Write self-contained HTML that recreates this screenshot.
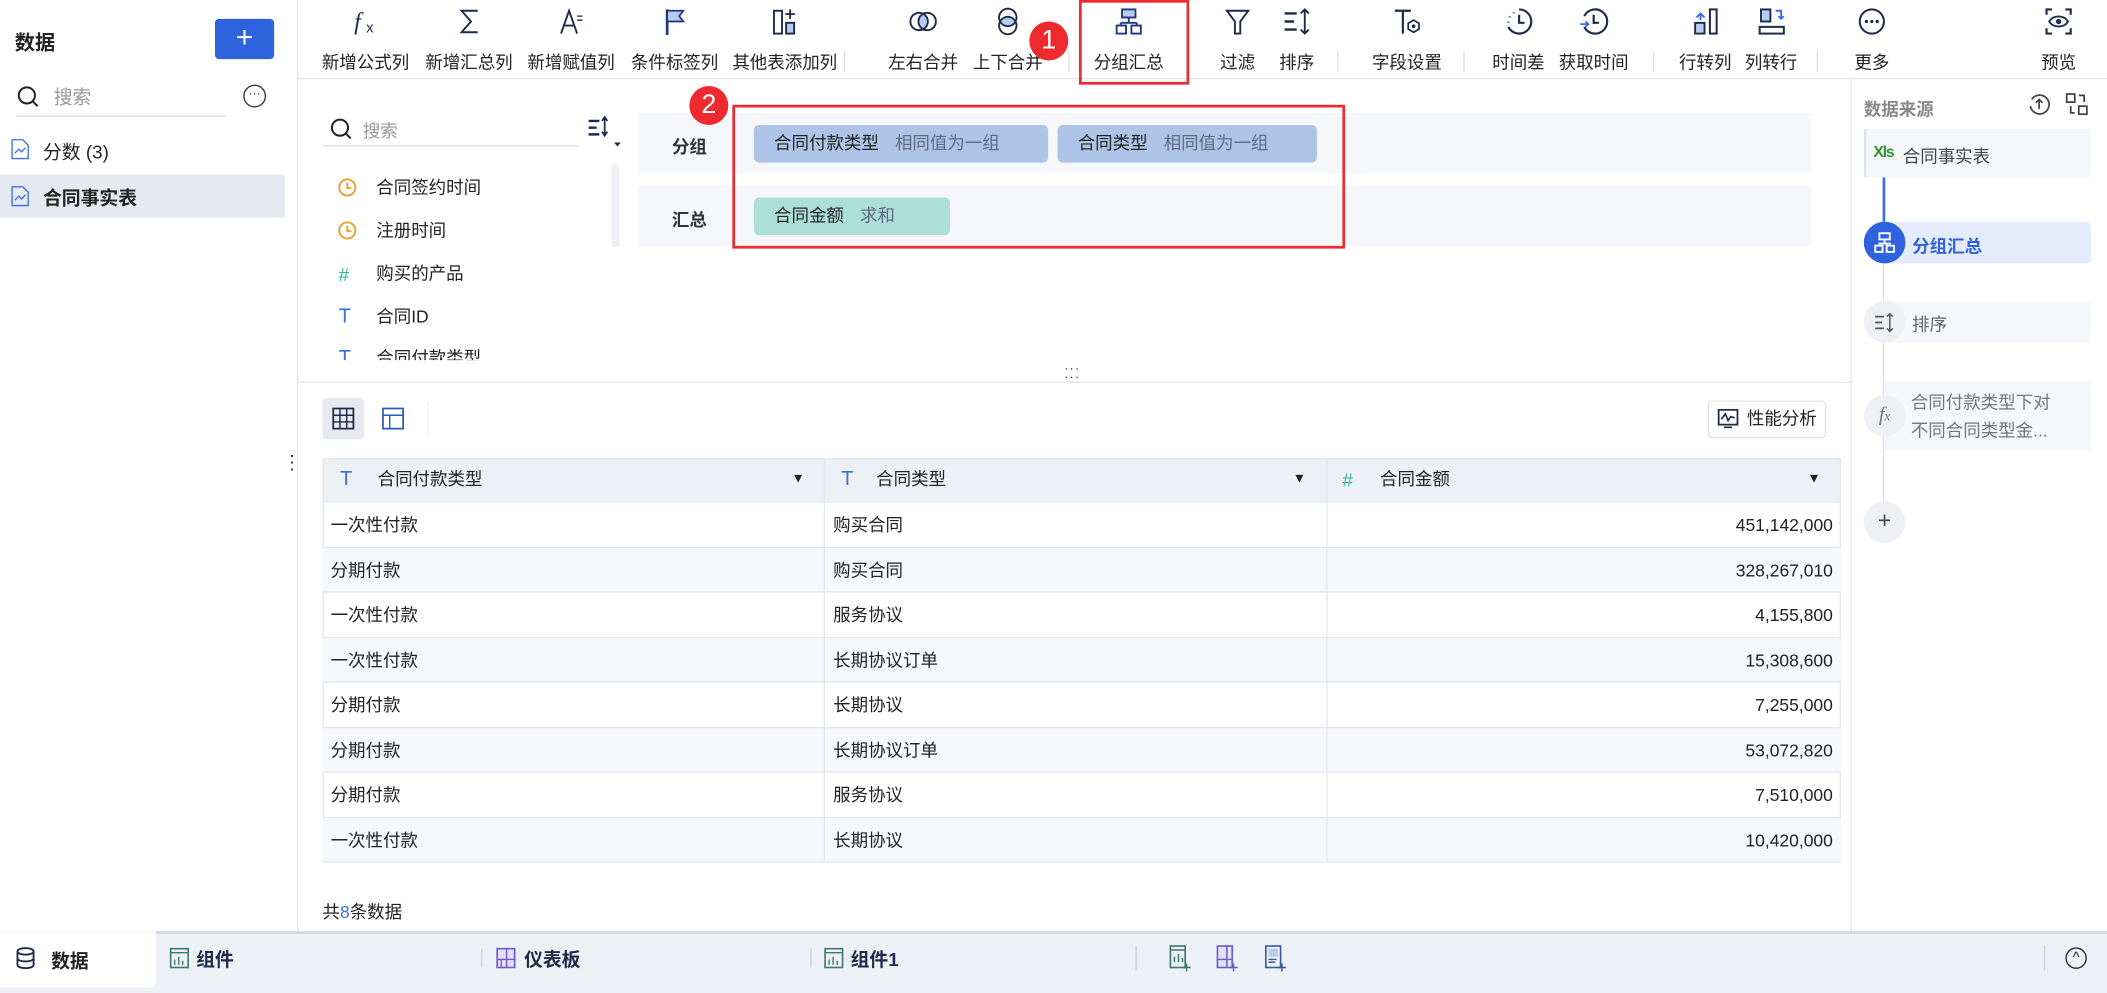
<!DOCTYPE html>
<html><head><meta charset="utf-8">
<style>
*{margin:0;padding:0;box-sizing:border-box}
html,body{width:2107px;height:993px;overflow:hidden;background:#fff}
#w{position:absolute;left:0;top:0;width:1568px;height:739px;transform:scale(1.34375);transform-origin:0 0;font-family:"Liberation Sans","Noto Sans CJK SC",sans-serif;font-size:13px;color:#222;}
.a{position:absolute;white-space:nowrap}
.tb{position:absolute;top:0;text-align:center;transform:translateX(-50%)}
.tb svg{display:block;margin:5px auto 0;width:22px;height:22px}
.tb span{display:block;margin-top:9px;font-size:13px;color:#222}
.sep{position:absolute;width:1px;background:#dde0e6}
.chip{position:absolute;height:28px;border-radius:4px;line-height:28px;padding-left:15px;font-size:13px}
.chip i{font-style:normal;color:#5d6b85;margin-left:12px}
.row{position:absolute;left:240px;width:1130px;height:33.5px;border-bottom:1px solid #e3e6ec;line-height:33px;font-size:13px}
.row div{position:absolute;top:0}
.ic{color:#3a6fe0;line-height:16px}
.lh{line-height:16px}
</style></head><body><div id="w">

<!-- left panel -->
<div class="a" style="left:0;top:0;width:222px;height:695px;border-right:1px solid #e3e6ec"></div>
<div class="a" style="left:11px;top:21px;font-size:15px;font-weight:bold">数据</div>
<div class="a" style="left:160px;top:14px;width:44px;height:30px;background:#2f62dd;border-radius:3px;color:#fff;text-align:center;line-height:28px;font-size:22px">+</div>
<svg class="a" style="left:12px;top:63px" width="18" height="18" viewBox="0 0 18 18"><circle cx="8" cy="8" r="6" fill="none" stroke="#222" stroke-width="1.5"/><path d="M12 12l4 4" stroke="#222" stroke-width="1.5"/></svg>
<div class="a" style="left:40px;top:62px;color:#999;font-size:14px">搜索</div>
<div class="a" style="left:12px;top:86px;width:156px;height:1px;background:#d8dbe2"></div>
<div class="a" style="left:181px;top:63px;width:17px;height:17px;border:1.3px solid #333;border-radius:50%;font-size:9px;text-align:center;line-height:10px">···</div>
<svg class="a" style="left:8px;top:103px" width="14" height="16"><path d="M1 1h8l4 4v10H1z" fill="none" stroke="#3a6fe0"/><path d="M3 11l3-3 2 2 3-3" fill="none" stroke="#3a6fe0"/></svg>
<div class="a" style="left:32px;top:103px;font-size:14px">分数 (3)</div>
<div class="a" style="left:0;top:130px;width:212px;height:32px;background:#e6e9f1"></div>
<svg class="a" style="left:8px;top:138px" width="14" height="16"><path d="M1 1h8l4 4v10H1z" fill="none" stroke="#3a6fe0"/><path d="M3 11l3-3 2 2 3-3" fill="none" stroke="#3a6fe0"/></svg>
<div class="a" style="left:32px;top:137px;font-size:14px;font-weight:bold">合同事实表</div>
<div class="a" style="left:215px;top:336px;font-size:14px;line-height:5px;width:3px">·<br>·<br>·</div>

<!-- toolbar -->
<div class="a" style="left:222px;top:58px;width:1346px;height:1px;background:#e3e6ec"></div>
<div class="tb" style="left:272px"><svg viewBox="0 0 22 22"><text x="2" y="17" font-size="18" font-style="italic" font-family="Liberation Serif" fill="#1e2a4a">f</text><text x="11" y="19" font-size="11" fill="#1e2a4a">x</text></svg><span>新增公式列</span></div>
<div class="tb" style="left:349px"><svg viewBox="0 0 22 22"><path d="M17 3H5l7 8-7 8h12" fill="none" stroke="#1e2a4a" stroke-width="1.4"/></svg><span>新增汇总列</span></div>
<div class="tb" style="left:425px"><svg viewBox="0 0 22 22"><path d="M3 20L9 3l6 17M5.5 14h7" fill="none" stroke="#1e2a4a" stroke-width="1.4"/><path d="M15 7h4M15 10h4" stroke="#1e2a4a"/></svg><span>新增赋值列</span></div>
<div class="tb" style="left:502px"><svg viewBox="0 0 22 22"><path d="M5 2v19" stroke="#1e3a7a" stroke-width="2"/><path d="M5 3h12l-3 4 3 4H5z" fill="#b6cbf0" stroke="#1e3a7a" stroke-width="1.3"/></svg><span>条件标签列</span></div>
<div class="tb" style="left:584px"><svg viewBox="0 0 22 22"><rect x="3" y="3" width="6" height="17" fill="none" stroke="#1e2a4a" stroke-width="1.4"/><rect x="12" y="12" width="6" height="8" fill="#b6cbf0" stroke="#1e2a4a" stroke-width="1.4"/><path d="M15 2v7M11.5 5.5h7" stroke="#1e2a4a" stroke-width="1.4"/></svg><span>其他表添加列</span></div>
<div class="sep" style="left:628px;top:38px;height:16px"></div>
<div class="tb" style="left:687px"><svg viewBox="0 0 22 22"><ellipse cx="11" cy="11" rx="3" ry="6" fill="#b6cbf0"/><circle cx="8" cy="11" r="6.5" fill="none" stroke="#1e2a4a" stroke-width="1.4"/><circle cx="14" cy="11" r="6.5" fill="none" stroke="#1e2a4a" stroke-width="1.4"/></svg><span>左右合并</span></div>
<div class="tb" style="left:750px"><svg viewBox="0 0 22 22"><ellipse cx="11" cy="11" rx="6" ry="3" fill="#b6cbf0"/><circle cx="11" cy="8" r="6.5" fill="none" stroke="#1e2a4a" stroke-width="1.4"/><circle cx="11" cy="14" r="6.5" fill="none" stroke="#1e2a4a" stroke-width="1.4"/></svg><span>上下合并</span></div>
<div class="sep" style="left:795px;top:38px;height:16px"></div>
<div class="tb" style="left:840px"><svg viewBox="0 0 22 22"><rect x="6" y="2" width="10" height="6" fill="#b6cbf0" stroke="#1e3a7a" stroke-width="1.4"/><path d="M11 8v4M5 12h12M5 12v2M17 12v2" fill="none" stroke="#1e3a7a" stroke-width="1.4"/><rect x="2" y="14" width="7" height="6" fill="none" stroke="#1e3a7a" stroke-width="1.4"/><rect x="13" y="14" width="7" height="6" fill="none" stroke="#1e3a7a" stroke-width="1.4"/></svg><span>分组汇总</span></div>
<div class="a" style="left:803px;top:0;width:82px;height:63px;border:2px solid #ee2a2e"></div>
<div class="tb" style="left:921px"><svg viewBox="0 0 22 22"><path d="M3 3h16l-6 8v9h-4v-9z" fill="none" stroke="#1e2a4a" stroke-width="1.4"/></svg><span>过滤</span></div>
<div class="tb" style="left:965px"><svg viewBox="0 0 22 22"><path d="M2 5h9M2 11h7M2 17h9" stroke="#1e2a4a" stroke-width="1.8"/><path d="M17 2v18M14 5l3-3 3 3M14 17l3 3 3-3" fill="none" stroke="#1e2a4a" stroke-width="1.4"/></svg><span>排序</span></div>
<div class="sep" style="left:995px;top:38px;height:16px"></div>
<div class="tb" style="left:1047px"><svg viewBox="0 0 22 22"><path d="M2 3h12M8 3v17" stroke="#1e2a4a" stroke-width="1.6"/><path d="M16 10l4 2.3v4.4L16 19l-4-2.3v-4.4z" fill="none" stroke="#1e2a4a" stroke-width="1.3"/><circle cx="16" cy="14.5" r="1.4" fill="#1e2a4a"/></svg><span>字段设置</span></div>
<div class="sep" style="left:1089px;top:38px;height:16px"></div>
<div class="tb" style="left:1130px"><svg viewBox="0 0 22 22"><path d="M11 2a9 9 0 1 1-8 13" fill="none" stroke="#1e2a4a" stroke-width="1.6"/><path d="M3 11v1M4 7v1M7 4v1" stroke="#3a6fe0" stroke-width="1.6"/><path d="M11 6v6h4" fill="none" stroke="#1e2a4a" stroke-width="1.6"/></svg><span>时间差</span></div>
<div class="tb" style="left:1186px"><svg viewBox="0 0 22 22"><path d="M4 7a9 9 0 1 1 0 8" fill="none" stroke="#1e2a4a" stroke-width="1.6"/><path d="M11 6v6h4" fill="none" stroke="#1e2a4a" stroke-width="1.6"/><path d="M1 13h6M5 11l2 2-2 2" fill="none" stroke="#3a6fe0" stroke-width="1.4"/></svg><span>获取时间</span></div>
<div class="sep" style="left:1230px;top:38px;height:16px"></div>
<div class="tb" style="left:1269px"><svg viewBox="0 0 22 22"><rect x="14" y="2" width="5" height="18" fill="none" stroke="#1e2a4a" stroke-width="1.5"/><rect x="3" y="12" width="7" height="8" fill="#b6cbf0" stroke="#1e2a4a" stroke-width="1.4"/><path d="M4 8l3-3 3 3M7 5v5" fill="none" stroke="#3a6fe0" stroke-width="1.4"/></svg><span>行转列</span></div>
<div class="tb" style="left:1318px"><svg viewBox="0 0 22 22"><rect x="2" y="15" width="18" height="5" fill="none" stroke="#1e2a4a" stroke-width="1.5"/><rect x="3" y="2" width="7" height="9" fill="#b6cbf0" stroke="#1e2a4a" stroke-width="1.4"/><path d="M14 3h4v6M16 7l2 2 2-2" fill="none" stroke="#3a6fe0" stroke-width="1.4"/></svg><span>列转行</span></div>
<div class="sep" style="left:1352px;top:38px;height:16px"></div>
<div class="tb" style="left:1393px"><svg viewBox="0 0 22 22"><circle cx="11" cy="11" r="9" fill="none" stroke="#1e2a4a" stroke-width="1.5"/><circle cx="7" cy="11" r="1.2" fill="#1e2a4a"/><circle cx="11" cy="11" r="1.2" fill="#1e2a4a"/><circle cx="15" cy="11" r="1.2" fill="#1e2a4a"/></svg><span>更多</span></div>
<div class="tb" style="left:1532px"><svg viewBox="0 0 22 22"><path d="M2 6V2h4M16 2h4v4M20 16v4h-4M6 20H2v-4" fill="none" stroke="#1e2a4a" stroke-width="1.6"/><path d="M4 11c3-5 11-5 14 0-3 5-11 5-14 0z" fill="none" stroke="#1e2a4a" stroke-width="1.4"/><circle cx="11" cy="11" r="2" fill="#1e2a4a"/></svg><span>预览</span></div>
<div class="a" style="left:766px;top:16px;width:29px;height:29px;border-radius:50%;background:#ee2a2e;color:#fff;font-size:20px;text-align:center;line-height:29px">1</div>

<!-- field list -->
<svg class="a" style="left:245px;top:87px" width="18" height="18"><circle cx="8" cy="8" r="6" fill="none" stroke="#222" stroke-width="1.5"/><path d="M12 12l4 4" stroke="#222" stroke-width="1.5"/></svg>
<div class="a" style="left:270px;top:87px;color:#999">搜索</div>
<div class="a" style="left:240px;top:108px;width:190px;height:1px;background:#d8dbe2"></div>
<svg class="a" style="left:437px;top:86px" width="26" height="24"><path d="M1 4h8M1 9h6M1 14h8" stroke="#1e2a4a" stroke-width="1.8"/><path d="M13 1v14M11 4l2-3 2 3M11 12l2 3 2-3" fill="none" stroke="#1e2a4a" stroke-width="1.3"/><path d="M20 20h5l-2.5 3z" fill="#1e2a4a"/></svg>
<div class="a" style="left:455px;top:122px;width:6px;height:62px;background:#eef0f4;border-radius:3px"></div>
<div class="a" style="left:240px;top:118px;width:210px;height:150px;overflow:hidden">
 <svg class="a" style="left:11px;top:14px" width="15" height="15"><circle cx="7.5" cy="7.5" r="6" fill="none" stroke="#e8a33a" stroke-width="1.5"/><path d="M7.5 4v4h3" fill="none" stroke="#e8a33a" stroke-width="1.5"/></svg><div class="a lh" style="left:40px;top:14px">合同签约时间</div>
 <svg class="a" style="left:11px;top:46px" width="15" height="15"><circle cx="7.5" cy="7.5" r="6" fill="none" stroke="#e8a33a" stroke-width="1.5"/><path d="M7.5 4v4h3" fill="none" stroke="#e8a33a" stroke-width="1.5"/></svg><div class="a lh" style="left:40px;top:46px">注册时间</div>
 <div class="a lh" style="left:12px;top:78px;color:#2fb59a;font-size:14px">#</div><div class="a lh" style="left:40px;top:78px">购买的产品</div>
 <div class="a ic" style="left:12px;top:110px;font-size:15px">T</div><div class="a lh" style="left:40px;top:110px">合同ID</div>
 <div class="a ic" style="left:12px;top:141px;font-size:15px">T</div><div class="a lh" style="left:40px;top:141px">合同付款类型</div>
</div>

<!-- group area -->
<div class="a" style="left:475px;top:84px;width:873px;height:45px;background:#f5f7fb"></div>
<div class="a" style="left:475px;top:138px;width:873px;height:45px;background:#f5f7fb"></div>
<div class="a" style="left:500px;top:99px;font-weight:bold;color:#333">分组</div>
<div class="a" style="left:500px;top:153px;font-weight:bold;color:#333">汇总</div>
<div class="chip" style="left:561px;top:93px;width:219px;background:#aec4e6">合同付款类型<i>相同值为一组</i></div>
<div class="chip" style="left:787px;top:93px;width:193px;background:#aec4e6">合同类型<i>相同值为一组</i></div>
<div class="chip" style="left:561px;top:147px;width:146px;background:#addfd9">合同金额<i>求和</i></div>
<div class="a" style="left:545px;top:78px;width:456px;height:107px;border:2px solid #ee2a2e"></div>
<div class="a" style="left:513px;top:64px;width:29px;height:29px;border-radius:50%;background:#ee2a2e;color:#fff;font-size:20px;text-align:center;line-height:29px">2</div>

<!-- divider -->
<div class="a" style="left:222px;top:284px;width:1155px;height:1px;background:#e3e6ec"></div>
<div class="a" style="left:792px;top:271px;font-size:9px;line-height:6px;letter-spacing:1px">···<br>···</div>

<!-- view toggle -->
<div class="a" style="left:240px;top:296px;width:31px;height:31px;background:#e6e9f0;border-radius:3px"></div>
<svg class="a" style="left:247px;top:303px" width="17" height="17"><rect x="1" y="1" width="15" height="15" fill="none" stroke="#1e2a4a" stroke-width="1.3"/><path d="M6 1v15M11 1v15M1 6h15M1 11h15" stroke="#1e2a4a" stroke-width="1.1"/></svg>
<svg class="a" style="left:284px;top:303px" width="17" height="17"><rect x="1" y="1" width="15" height="15" fill="none" stroke="#2b5bbf" stroke-width="1.3"/><path d="M1 6h15M6 6v10" stroke="#2b5bbf" stroke-width="1.1"/></svg>
<div class="sep" style="left:318px;top:299px;height:24px;background:#eceef2"></div>
<div class="a" style="left:1271px;top:298px;width:88px;height:28px;border:1px solid #dfe2e8;border-radius:3px;line-height:26px;padding-left:28px;font-size:13px">性能分析</div>
<svg class="a" style="left:1278px;top:304px" width="16" height="16"><rect x="1" y="1" width="14" height="11" fill="none" stroke="#1e2a4a" stroke-width="1.3"/><path d="M3 8l3-4 2 5 2-3 3 1M5 14h6" fill="none" stroke="#1e2a4a" stroke-width="1.2"/></svg>

<!-- table -->
<div class="a" style="left:240px;top:341px;width:1130px;height:33px;background:#edf0f5;border:1px solid #e3e6ec"></div>
<div class="a" style="left:613px;top:341px;width:1px;height:300px;background:#e3e6ec;z-index:2"></div>
<div class="a" style="left:987px;top:341px;width:1px;height:300px;background:#e3e6ec;z-index:2"></div>
<div class="a ic" style="left:253px;top:349px;font-size:15px">T</div><div class="a lh" style="left:281px;top:349px">合同付款类型</div><div class="a lh" style="left:589px;top:349px;font-size:10px">▼</div>
<div class="a ic" style="left:626px;top:349px;font-size:15px">T</div><div class="a lh" style="left:652px;top:349px">合同类型</div><div class="a lh" style="left:962px;top:349px;font-size:10px">▼</div>
<div class="a lh" style="left:999px;top:349px;color:#2fb59a;font-size:14px">#</div><div class="a lh" style="left:1027px;top:349px">合同金额</div><div class="a lh" style="left:1345px;top:349px;font-size:10px">▼</div>

<div class="a" style="left:240px;top:374px;width:1130px;height:268px;border-left:1px solid #e3e6ec;border-right:1px solid #e3e6ec"></div>
<div class="row" style="top:374px"><div style="left:6px">一次性付款</div><div style="left:380px">购买合同</div><div style="right:6px">451,142,000</div></div>
<div class="row" style="top:407.5px;background:#f6f8fc"><div style="left:6px">分期付款</div><div style="left:380px">购买合同</div><div style="right:6px">328,267,010</div></div>
<div class="row" style="top:441px"><div style="left:6px">一次性付款</div><div style="left:380px">服务协议</div><div style="right:6px">4,155,800</div></div>
<div class="row" style="top:474.5px;background:#f6f8fc"><div style="left:6px">一次性付款</div><div style="left:380px">长期协议订单</div><div style="right:6px">15,308,600</div></div>
<div class="row" style="top:508px"><div style="left:6px">分期付款</div><div style="left:380px">长期协议</div><div style="right:6px">7,255,000</div></div>
<div class="row" style="top:541.5px;background:#f6f8fc"><div style="left:6px">分期付款</div><div style="left:380px">长期协议订单</div><div style="right:6px">53,072,820</div></div>
<div class="row" style="top:575px"><div style="left:6px">分期付款</div><div style="left:380px">服务协议</div><div style="right:6px">7,510,000</div></div>
<div class="row" style="top:608.5px;background:#f6f8fc"><div style="left:6px">一次性付款</div><div style="left:380px">长期协议</div><div style="right:6px">10,420,000</div></div>
<div class="a" style="left:240px;top:668px">共<span style="color:#3a6fe0">8</span>条数据</div>

<!-- right panel -->
<div class="a" style="left:1377px;top:59px;width:1px;height:636px;background:#e3e6ec"></div>
<div class="a" style="left:1387px;top:71px;color:#888;font-weight:bold">数据来源</div>
<svg class="a" style="left:1509px;top:69px" width="17" height="17"><path d="M3 5a7 7 0 1 1-1 5" fill="none" stroke="#444" stroke-width="1.3"/><path d="M8.5 12V5M6 7.5l2.5-2.5 2.5 2.5" fill="none" stroke="#444" stroke-width="1.3"/></svg>
<svg class="a" style="left:1537px;top:69px" width="17" height="17"><rect x="1" y="1" width="6" height="6" fill="none" stroke="#444" stroke-width="1.3"/><rect x="10" y="10" width="6" height="6" fill="none" stroke="#444" stroke-width="1.3"/><path d="M10 2h4v5M4 10v5h3" fill="none" stroke="#444" stroke-width="1.3"/></svg>
<div class="a" style="left:1401px;top:132px;width:1.5px;height:33px;background:#3a6fe0"></div>
<div class="a" style="left:1401px;top:196px;width:1px;height:180px;background:#dfe2e8"></div>
<div class="a" style="left:1387px;top:96px;width:169px;height:36px;background:#f5f7fb;border-left:2px solid #dfe2e8"></div>
<div class="a" style="left:1394px;top:106px;color:#2e9a2e;font-weight:bold;font-size:12px;letter-spacing:-1px">Xls</div>
<div class="a" style="left:1416px;top:106px;color:#444">合同事实表</div>
<div class="a" style="left:1402px;top:165px;width:154px;height:31px;background:#e4ecfb;border-radius:0 3px 3px 0"></div>
<div class="a" style="left:1387px;top:165px;width:31px;height:31px;border-radius:50%;background:#2f62dd"></div>
<svg class="a" style="left:1394px;top:172px" width="17" height="17" viewBox="0 0 22 22"><rect x="6" y="2" width="10" height="6" fill="none" stroke="#fff" stroke-width="1.8"/><path d="M11 8v4M5 12h12" stroke="#fff" stroke-width="1.8"/><rect x="2" y="14" width="7" height="6" fill="none" stroke="#fff" stroke-width="1.8"/><rect x="13" y="14" width="7" height="6" fill="none" stroke="#fff" stroke-width="1.8"/></svg>
<div class="a" style="left:1423px;top:173px;color:#2f62dd;font-weight:bold">分组汇总</div>
<div class="a" style="left:1402px;top:224px;width:154px;height:31px;background:#f5f7fb"></div>
<div class="a" style="left:1387px;top:224px;width:31px;height:31px;border-radius:50%;background:#eef0f4"></div>
<svg class="a" style="left:1394px;top:232px" width="16" height="16" viewBox="0 0 22 22"><path d="M2 5h9M2 11h7M2 17h9" stroke="#555" stroke-width="1.8"/><path d="M17 2v18M14 5l3-3 3 3M14 17l3 3 3-3" fill="none" stroke="#555" stroke-width="1.5"/></svg>
<div class="a" style="left:1423px;top:231px;color:#666">排序</div>
<div class="a" style="left:1402px;top:283px;width:154px;height:52px;background:#f5f7fb"></div>
<div class="a" style="left:1387px;top:294px;width:31px;height:31px;border-radius:50%;background:#eef0f4;color:#777;font-style:italic;font-family:'Liberation Serif';text-align:center;line-height:30px;font-size:15px">f<span style="font-size:10px">x</span></div>
<div class="a" style="left:1422px;top:289px;color:#777;line-height:21px">合同付款类型下对<br>不同合同类型金...</div>
<div class="a" style="left:1387px;top:373px;width:31px;height:31px;border-radius:50%;background:#eef0f4;text-align:center;line-height:30px;font-size:17px;color:#444">+</div>

<!-- bottom bar -->
<div class="a" style="left:0;top:693px;width:1568px;height:46px;background:#edf0f5;border-top:2px solid #d4d8e0"></div>
<div class="a" style="left:0;top:693px;width:116px;height:42px;background:#fff;border-radius:0 0 5px 0"></div>
<svg class="a" style="left:11px;top:704px" width="16" height="18"><ellipse cx="8" cy="4" rx="6" ry="2.5" fill="none" stroke="#1e2a4a" stroke-width="1.4"/><path d="M2 4v10c0 3.3 12 3.3 12 0V4M2 9c0 3.3 12 3.3 12 0" fill="none" stroke="#1e2a4a" stroke-width="1.4"/></svg>
<div class="a" style="left:38px;top:705px;font-weight:bold;font-size:14px">数据</div>
<svg class="a" style="left:126px;top:705px" width="15" height="16"><rect x="1" y="1" width="13" height="14" fill="none" stroke="#3a7a6a" stroke-width="1.2"/><path d="M1 4h13M4 13V9M7 13V7M10 13V10" stroke="#3a7a6a" stroke-width="1"/></svg>
<div class="a" style="left:146px;top:704px;font-weight:bold;font-size:14px;color:#1e2a4a">组件</div>
<div class="sep" style="left:358px;top:706px;height:14px;background:#ccd0d8"></div>
<svg class="a" style="left:369px;top:705px" width="15" height="16"><rect x="1" y="1" width="13" height="14" fill="#e4e0f6" stroke="#6a5acd" stroke-width="1.2"/><path d="M8 1v14M1 9h13M4 9v6" stroke="#6a5acd" stroke-width="1"/></svg>
<div class="a" style="left:390px;top:704px;font-weight:bold;font-size:14px;color:#1e2a4a">仪表板</div>
<div class="sep" style="left:603px;top:706px;height:14px;background:#ccd0d8"></div>
<svg class="a" style="left:613px;top:705px" width="15" height="16"><rect x="1" y="1" width="13" height="14" fill="none" stroke="#3a7a6a" stroke-width="1.2"/><path d="M1 4h13M4 13V9M7 13V7M10 13V10" stroke="#3a7a6a" stroke-width="1"/></svg>
<div class="a" style="left:633px;top:704px;font-weight:bold;font-size:14px;color:#1e2a4a">组件1</div>
<div class="sep" style="left:845px;top:704px;height:18px;background:#ccd0d8"></div>
<svg class="a" style="left:869px;top:703px" width="20" height="20"><rect x="2" y="1" width="11" height="16" fill="none" stroke="#3a7a6a" stroke-width="1.2"/><path d="M2 4h11M5 13V9M8 13V7M11 13V10M14 14v6M11 17h6" stroke="#3a7a6a" stroke-width="1.1"/></svg>
<svg class="a" style="left:904px;top:703px" width="20" height="20"><rect x="2" y="1" width="11" height="16" fill="#e4e0f6" stroke="#6a5acd" stroke-width="1.2"/><path d="M2 11h11M9 1v16M14 14v6M11 17h6" stroke="#6a5acd" stroke-width="1.1"/></svg>
<svg class="a" style="left:940px;top:703px" width="20" height="20"><rect x="2" y="1" width="11" height="16" fill="none" stroke="#3a5aa0" stroke-width="1.2"/><rect x="4" y="3" width="7" height="6" fill="#b6cbf0"/><path d="M4 11h6M4 13h5M14 14v6M11 17h6" stroke="#3a5aa0" stroke-width="1.1"/></svg>
<div class="sep" style="left:1521px;top:704px;height:18px;background:#ccd0d8"></div>
<div class="a" style="left:1537px;top:705px;width:16px;height:16px;border:1.4px solid #1e2a4a;border-radius:50%;text-align:center;font-size:11px;line-height:15px">^</div>

</div></body></html>
